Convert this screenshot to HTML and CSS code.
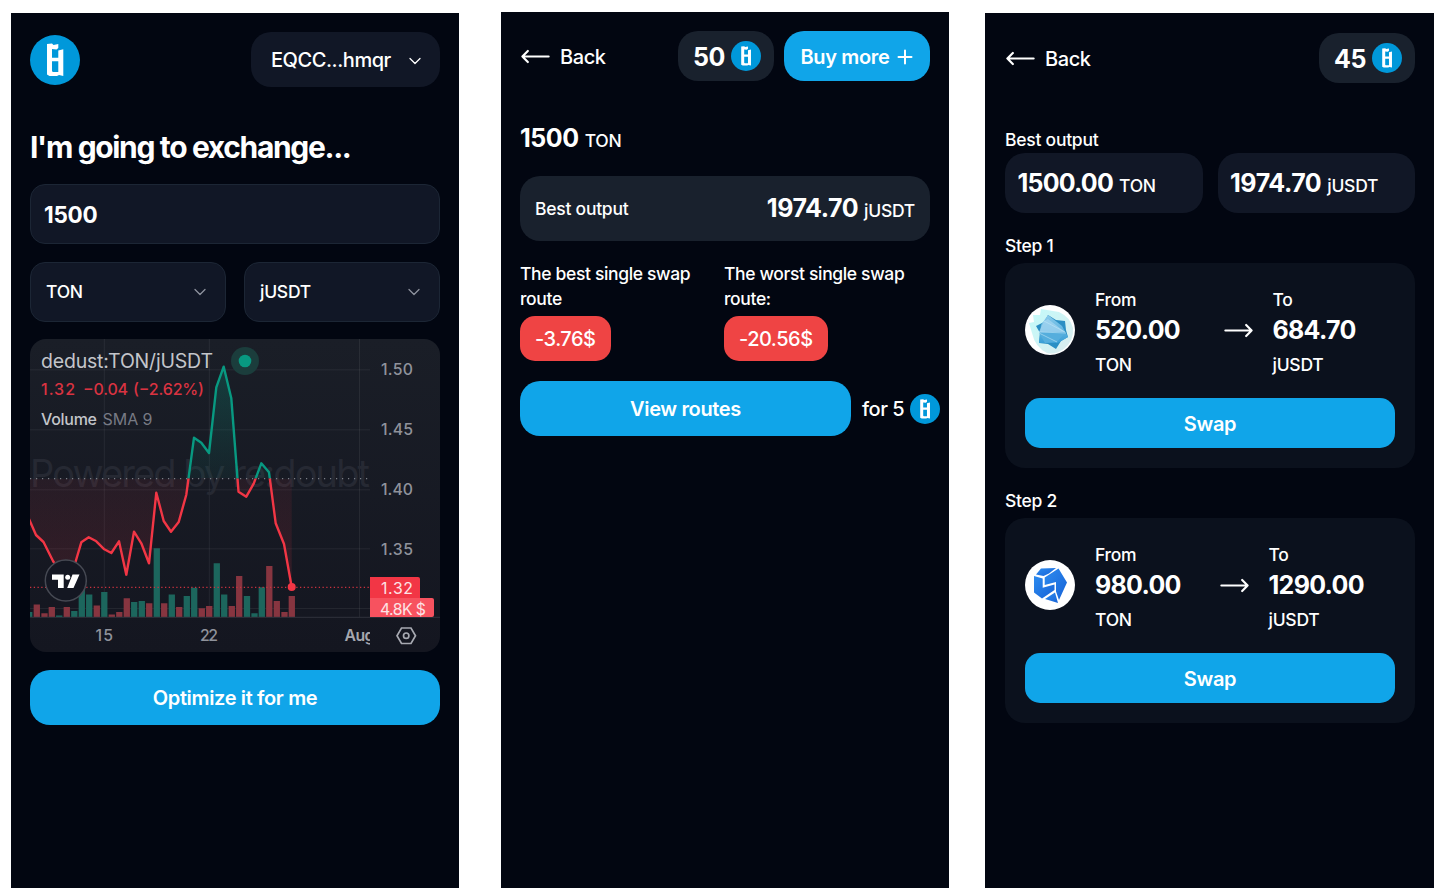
FILE: index.html
```html
<!DOCTYPE html>
<html lang="en">
<head>
<meta charset="utf-8">
<title>Exchange optimizer</title>
<link rel="stylesheet" href="styles.css">
</head>
<body>
<svg class="defs" width="0" height="0">
  <symbol id="coin" viewBox="0 0 50 50">
    <circle cx="25" cy="25" r="25" fill="#0098da"/>
    <path fill="#fff" fill-rule="evenodd" d="M17 9L22 8.600L23.500 10L28.300 9V13L26.500 14.500L22 14V22.700H28.300V15.500L33.300 14.300V41L29 40L27 41H19.500L17 39.500ZM22 26.300V36.300L23 37H28.300V26.300Z"/>
  </symbol>
  <symbol id="arrow-left" viewBox="0 0 24 24">
    <path d="M6.750 15.750L3 12m0 0l3.750-3.750M3 12h18" fill="none" stroke="#fff" stroke-width="1.500" stroke-linecap="round" stroke-linejoin="round"/>
  </symbol>
  <symbol id="arrow-right" viewBox="0 0 24 24">
    <path d="M17.250 8.250L21 12m0 0l-3.750 3.750M21 12H3" fill="none" stroke="#fff" stroke-width="1.500" stroke-linecap="round" stroke-linejoin="round"/>
  </symbol>
  <symbol id="chevron" viewBox="0 0 12 8">
    <path d="M1 1.500L6 6.500L11 1.500" fill="none" stroke="currentColor" stroke-width="1.300" stroke-linecap="round" stroke-linejoin="round"/>
  </symbol>
</svg>

<main class="board">
  <section class="screen screen-home">
    <header class="home-head">
      <svg class="logo"><use href="#coin"/></svg>
      <div class="account"><span>EQCC...hmqr</span><svg class="chev"><use href="#chevron"/></svg></div>
    </header>
    <h1 class="title">I'm going to exchange...</h1>
    <div class="amount-input">1500</div>
    <div class="selects">
      <div class="select"><span>TON</span><svg class="chev"><use href="#chevron"/></svg></div>
      <div class="select"><span>jUSDT</span><svg class="chev"><use href="#chevron"/></svg></div>
    </div>
    <svg class="chart" viewBox="30 339 410 313">
      <defs>
        <linearGradient id="bg" x1="0" y1="0" x2="0" y2="1"><stop offset="0" stop-color="#1a1e27"/><stop offset="1" stop-color="#141620"/></linearGradient>
        <linearGradient id="up" gradientUnits="userSpaceOnUse" x1="0" y1="366" x2="0" y2="478.500"><stop offset="0" stop-color="#089981" stop-opacity=".26"/><stop offset="1" stop-color="#089981" stop-opacity=".07"/></linearGradient>
        <linearGradient id="down" gradientUnits="userSpaceOnUse" x1="0" y1="478.500" x2="0" y2="587"><stop offset="0" stop-color="#f23645" stop-opacity=".07"/><stop offset="1" stop-color="#f23645" stop-opacity=".14"/></linearGradient>
        <clipPath id="above"><rect x="30" y="339" width="340" height="139.500"/></clipPath>
        <clipPath id="below"><rect x="30" y="478.500" width="340" height="140"/></clipPath>
        <clipPath id="plot"><rect x="30" y="339" width="340" height="313"/></clipPath>
        <path id="price" d="M29 519L36 535L43.500 542L53 561L61 573L70 577L75.500 562L81.300 542.300L88.700 537.300L96.300 541.300L104.300 549.300L111.300 553L119 541.300L126.300 574.700L134 531.700L141.300 543.300L149 563.300L156.300 492.700L163.700 521L171 531.700L178.700 522L186.300 494.700L194 437.700L201.300 442.700L209 453L216.300 387.300L223.700 366.700L231.300 398.300L238.500 491.700L246.300 496.700L253.700 483.700L261.300 463.300L269 472.300L275.700 523.300L284 544L291.700 587"/>
        <path id="area" d="M29 519L36 535L43.500 542L53 561L61 573L70 577L75.500 562L81.300 542.300L88.700 537.300L96.300 541.300L104.300 549.300L111.300 553L119 541.300L126.300 574.700L134 531.700L141.300 543.300L149 563.300L156.300 492.700L163.700 521L171 531.700L178.700 522L186.300 494.700L194 437.700L201.300 442.700L209 453L216.300 387.300L223.700 366.700L231.300 398.300L238.500 491.700L246.300 496.700L253.700 483.700L261.300 463.300L269 472.300L275.700 523.300L284 544L291.700 587V478.500H29Z"/>
      </defs>
      <rect x="30" y="339" width="410" height="313" fill="url(#bg)"/>
      <path d="M104.300 339V617M209.300 339V617M359.500 339V617M30 369.800H370M30 429.800H370M30 489.800H370M30 548.800H370M30 608.500H370" stroke="#fff" stroke-opacity=".065" fill="none"/>
      <text x="30" y="487" font-size="38" fill="#262933" textLength="340" lengthAdjust="spacing">Powered by re:doubt</text>
      <use href="#area" fill="url(#up)" clip-path="url(#above)"/>
      <use href="#area" fill="url(#down)" clip-path="url(#below)"/>
      <g clip-path="url(#plot)" fill="none" stroke-width="6.300">
        <path stroke="#1c665d" d="M29.200 617V612M59.200 617V615.500M74.300 617V611M81.800 617V590M89.200 617V594.500M104.300 617V592M134.200 617V602M141.800 617V601M156.800 617V548.300M171.800 617V594.500M186.800 617V596M194.200 617V587.700M216.800 617V563.300M224.200 617V594.500M247 617V596M254.500 617V613.300M261.800 617V587.300"/>
        <path stroke="#873540" d="M36.800 617V604.500M44.500 617V613.300M51.800 617V607M66.800 617V607M96.800 617V605.500M111.800 617V614.500M119.300 617V612M126.800 617V598.300M149.200 617V603.300M164.200 617V603.300M179.200 617V607M201.800 617V608.300M209.200 617V606M231.800 617V606M239.200 617V576M269.300 617V566M276.800 617V601M284.500 617V612M291.800 617V596"/>
      </g>
      <path d="M30 617.300H440" stroke="#30333d"/>
      <path d="M30 478.700H370" stroke="#7b7e87" stroke-width="1.200" stroke-dasharray="1.200 4.800"/>
      <path d="M30 587.300H370" stroke="#c9323f" stroke-width="1.200" stroke-dasharray="1.300 2.450"/>
      <g fill="none" stroke-width="2.400" stroke-linejoin="round">
        <use href="#price" stroke="#089981" clip-path="url(#above)"/>
        <use href="#price" stroke="#f23645" clip-path="url(#below)"/>
      </g>
      <circle cx="291.700" cy="587" r="4" fill="#f23645"/>
      <circle cx="245" cy="361" r="14" fill="#1b3d3c"/>
      <circle cx="245" cy="361" r="6.300" fill="#089981"/>
      <g fill="#c3c5ca">
        <text x="41" y="368" font-size="19.500" textLength="172">dedust:TON/jUSDT</text>
        <text x="41" y="424.500" font-size="16" font-weight="500" textLength="56">Volume</text>
        <text x="102.500" y="424.500" font-size="16" fill="#777a84" textLength="50">SMA 9</text>
      </g>
      <g fill="#d93341" font-size="16" font-weight="500">
        <text x="41" y="394.500" textLength="34">1.32</text>
        <text x="83" y="394.500" textLength="45">−0.04</text>
        <text x="133" y="394.500" textLength="71">(−2.62%)</text>
      </g>
      <g font-size="15.800" fill="#8f929b" font-weight="500">
        <text x="381" y="374.500" textLength="32">1.50</text>
        <text x="381" y="434.500" textLength="32">1.45</text>
        <text x="381" y="494.500" textLength="32">1.40</text>
        <text x="381" y="554.500" textLength="32">1.35</text>
        <text x="95.500" y="641" textLength="17.500">15</text>
        <text x="200" y="641" textLength="18">22</text>
        <g clip-path="url(#plot)"><text x="344.500" y="641" font-weight="600" fill="#a5a7ae" textLength="30">Aug</text></g>
      </g>
      <path d="M370 577H418q2 0 2 2V598H370Z" fill="#f23645"/>
      <path d="M370 598H432q2 0 2 2V615q0 2-2 2H370Z" fill="#f7525f"/>
      <g font-size="15.800" fill="#fde3e5">
        <text x="381" y="593.500" textLength="32">1.32</text>
        <text x="380" y="614.500" textLength="46">4.8K $</text>
      </g>
      <g fill="none" stroke="#a7a9b1" stroke-width="1.700"><path d="M401.500 628H411L415.500 635.700L411 643.500H401.500L397 635.700Z"/><circle cx="406.200" cy="635.700" r="2.700"/></g>
      <circle cx="65.800" cy="580.500" r="20.500" fill="#141722" stroke="#464953" stroke-width="1.500"/>
      <g fill="#fff"><path d="M52 574.500H63.700V588H58V579.700H52Z"/><circle cx="67.700" cy="577.200" r="2.500"/><path d="M72.500 574.500H79.500L73.500 588H67.200Z"/></g>
    </svg>
    <button class="btn btn-tall">Optimize it for me</button>
  </section>

  <section class="screen screen-quote">
    <header class="head">
      <a class="back"><svg class="arrow"><use href="#arrow-left"/></svg><span>Back</span></a>
      <div class="head-actions">
        <div class="chip"><b>50</b><svg class="coin"><use href="#coin"/></svg></div>
        <button class="btn buy"><span>Buy more</span><svg class="plus" viewBox="0 0 16 16"><path d="M8 1.500V14.500M1.500 8H14.500" stroke="#fff" stroke-width="2" stroke-linecap="round"/></svg></button>
      </div>
    </header>
    <div class="sum entered"><b>1500</b><span>TON</span></div>
    <div class="output"><span>Best output</span><div class="sum"><b>1974.70</b><span>jUSDT</span></div></div>
    <div class="compare">
      <div class="compare-item"><p>The best single swap<br>route</p><span class="loss">-3.76$</span></div>
      <div class="compare-item"><p>The worst single swap<br>route:</p><span class="loss">-20.56$</span></div>
    </div>
    <div class="view-row">
      <button class="btn btn-tall view">View routes</button>
      <span class="price">for 5</span><svg class="coin"><use href="#coin"/></svg>
    </div>
  </section>

  <section class="screen screen-route">
    <header class="head">
      <a class="back"><svg class="arrow"><use href="#arrow-left"/></svg><span>Back</span></a>
      <div class="chip"><b>45</b><svg class="coin"><use href="#coin"/></svg></div>
    </header>
    <p class="label">Best output</p>
    <div class="totals">
      <div class="total sum"><b class="round">1500.00</b><span>TON</span></div>
      <div class="total sum"><b>1974.70</b><span>jUSDT</span></div>
    </div>
    <p class="label step-label">Step 1</p>
    <article class="step">
      <div class="step-row">
        <svg class="dex" viewBox="0 0 50 50">
          <defs>
            <clipPath id="disc"><circle cx="25" cy="25" r="25"/></clipPath>
            <linearGradient id="mint" x1="0" y1="0" x2="1" y2="1"><stop offset="0" stop-color="#c2fbfa"/><stop offset="1" stop-color="#dcebee"/></linearGradient>
            <linearGradient id="gem" x1="0" y1="0" x2="0" y2="1"><stop offset="0" stop-color="#8ccdec"/><stop offset="1" stop-color="#399ed6"/></linearGradient>
          </defs>
          <circle cx="25" cy="25" r="25" fill="#fff"/>
          <g clip-path="url(#disc)">
            <path d="M4 18L9 17L8 10L15 10L16 4L34 7Q45 12 48 23Q49 36 39 44Q30 50 22 48Q10 42 7 28Z" fill="url(#mint)"/>
            <path d="M11 21L19 17L23 10L31 15L40 16L41 25L43 32L36 36L31 44L23 39L14 38L15 28Z" fill="#2b8fc4"/>
            <path d="M16 20L23 10L37 21L43 32L33 38L14 38L15 28Z" fill="url(#gem)"/>
            <path d="M19 16L23 14L40 27H14Z" fill="#a6d6f0" opacity=".75"/>
            <path d="M14 28H40L32 37L20 38Z" fill="#55aedd"/>
            <path d="M19 16L40 27M14 27L41 28M14 28L32 37" stroke="#bfe5f7" stroke-width=".6"/>
          </g>
        </svg>
        <div class="leg leg-from leg-wide"><span>From</span><b>520.00</b><span>TON</span></div>
        <svg class="arrow"><use href="#arrow-right"/></svg>
        <div class="leg leg-to"><span>To</span><b>684.70</b><span>jUSDT</span></div>
      </div>
      <button class="btn swap">Swap</button>
    </article>
    <p class="label step-label">Step 2</p>
    <article class="step">
      <div class="step-row">
        <svg class="dex" viewBox="0 0 50 50">
          <defs><linearGradient id="stone" x1="0" y1="0" x2="1" y2="1"><stop offset="0" stop-color="#2d8bef"/><stop offset="1" stop-color="#1763d7"/></linearGradient></defs>
          <circle cx="25" cy="25" r="25" fill="#fff"/>
          <g fill="url(#stone)">
            <path d="M16 8.500L31 8L24 13.500L18.500 16L11 14.500Z"/>
            <path d="M9 16L17.700 18.500V27.800L29.500 24.500V30L17 38.500L9 32.500Z"/>
            <path d="M33.500 8.500L42 22.500L34 40L31 31.500V22L19.700 25V17.500Z"/>
            <path d="M20 39L30 32.500L33 43Z"/>
          </g>
        </svg>
        <div class="leg leg-from"><span>From</span><b>980.00</b><span>TON</span></div>
        <svg class="arrow"><use href="#arrow-right"/></svg>
        <div class="leg leg-to"><span>To</span><b>1290.00</b><span>jUSDT</span></div>
      </div>
      <button class="btn swap">Swap</button>
    </article>
  </section>
</main>
</body>
</html>
```
FILE: styles.css
```css
* { box-sizing: border-box; }
body { margin: 0; background: #fff; color: #fff; font-family: Inter, "Liberation Sans", sans-serif; font-size: 17.5px; font-weight: 450; line-height: 25px; height: 888px; overflow: hidden; }
p, h1 { margin: 0; }
svg { display: block; flex: none; }
b { font-weight: 700; }
.defs { position: absolute; }
.board { display: grid; grid-template-columns: 448px 448px 449px; column-gap: 42px; padding-left: 11px; height: 888px; }
.screen { background: #020611; display: flex; flex-direction: column; margin-top: 13px; padding: 0 19px; letter-spacing: -.25px; }
.screen-quote { margin-top: 12px; padding-top: 19px; }
.screen-route { margin-left: -6px; margin-right: 6px; padding: 20px 19px 0 20px; }

.btn { border: 0; background: #10a5e9; color: #fff; font: 600 20px/25px Inter, "Liberation Sans", sans-serif; letter-spacing: -.35px; padding: 2px 0 0; border-radius: 15px; display: flex; align-items: center; justify-content: center; flex: none; }
.btn-tall { height: 55px; border-radius: 20px; }

.home-head { display: flex; justify-content: space-between; align-items: center; height: 55px; margin-top: 19px; }
.logo { width: 50px; height: 50px; }
.account { display: flex; align-items: center; justify-content: space-between; width: 189px; height: 55px; padding: 2px 19px 0 20px; border-radius: 20px; background: #111726; font-size: 20px; letter-spacing: -.45px; }
.chev { width: 12px; height: 8px; }
.title { font-size: 30px; font-weight: 650; line-height: 40px; letter-spacing: -1.35px; margin-top: 40px; }
.amount-input { height: 60px; margin-top: 17px; padding: 0 13px; display: flex; align-items: center; border: 1px solid #1c2635; border-radius: 15px; background: #111726; font-size: 22.5px; font-weight: 700; }
.selects { display: grid; grid-template-columns: 1fr 1fr; gap: 18px; margin-top: 18px; }
.select { height: 60px; padding: 0 19px 2px 15px; display: flex; align-items: center; justify-content: space-between; border: 1px solid #1c2635; border-radius: 15px; background: #111726; font-weight: 500; }
.select .chev { color: #8d929d; margin-top: 2px; }
.chart { width: 410px; height: 313px; margin: 17px 0 18px; border-radius: 16px; letter-spacing: 0; font-weight: 400; }

.head { display: flex; align-items: center; justify-content: space-between; height: 50px; flex: none; }
.back { display: flex; align-items: center; font-size: 20px; margin-left: -2px; gap: 7px; letter-spacing: -.4px; }
.back span { margin-top: 2px; }
.arrow { width: 35px; height: 35px; }
.head-actions { display: flex; gap: 10px; }
.chip { display: flex; align-items: center; justify-content: space-between; width: 96px; height: 50px; padding: 0 13px 0 15px; border-radius: 20px; background: #19212d; font-size: 25px; letter-spacing: -.5px; }
.chip b { margin-top: 2px; }
.coin { width: 30px; height: 30px; }
.buy { width: 146px; height: 50px; border-radius: 20px; gap: 8px; }
.plus { width: 16px; height: 16px; }
.sum { display: flex; align-items: baseline; gap: 6px; line-height: 35px; height: 35px; }
.sum b { font-size: 25px; letter-spacing: -.45px; }
.sum .round { letter-spacing: -.8px; }
.entered { margin-top: 40px; }
.output { display: flex; align-items: center; justify-content: space-between; height: 65px; margin-top: 20px; padding: 0 15px; border-radius: 20px; background: #19212d; }
.compare { display: grid; grid-template-columns: 204px 1fr; margin-top: 20px; }
.compare-item { display: flex; flex-direction: column; align-items: flex-start; gap: 5px; letter-spacing: -.35px; }
.loss { height: 45px; padding: 2px 15px 0; display: flex; align-items: center; border-radius: 15px; background: #ef4444; font-size: 20px; font-weight: 500; letter-spacing: -.5px; }
.view-row { display: flex; align-items: center; margin: 20px -10px 0 0; }
.view { width: 331px; }
.price { font-size: 20px; letter-spacing: -.5px; margin-left: 11px; margin-right: auto; padding-top: 1px; }

.label { margin-top: 44px; }
.totals { display: grid; grid-template-columns: 1fr 1fr; gap: 15px; margin-top: 1px; }
.total { height: 60px; padding: 13px 12.5px 0; border-radius: 20px; background: #111726; }
.step-label { margin-top: 20px; }
.step { height: 205px; margin-top: 5px; padding: 24px 20px 20px; border-radius: 20px; background: #0b111d; }
.step-row { display: flex; align-items: center; height: 90px; }
.dex { width: 50px; height: 50px; margin-top: -4px; }
.step-row .arrow { margin-top: -3px; }
.leg { display: flex; flex-direction: column; }
.leg b { font-size: 25px; line-height: 35px; letter-spacing: -.7px; margin: 1px 0 4px; }
.leg-from { margin-left: 20px; width: 122px; }
.leg-wide { width: 126px; }
.leg-to { margin-left: 16.5px; }
.swap { width: 100%; height: 50px; margin-top: 21px; }
```
